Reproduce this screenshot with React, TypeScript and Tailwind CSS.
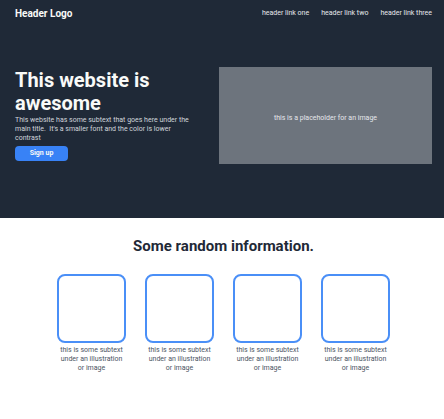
const links = ["header link one", "header link two", "header link three"];
const cards = [1, 2, 3, 4];
const subtext =
  "This website has some subtext that goes here under the main title. \u00a0It's a smaller font and the color is lower contrast";

export default function App() {
  return (
    <div className="min-h-screen bg-white font-[Roboto,sans-serif] text-[#1f2937]">
      <div className="bg-[#1f2937] pt-[6px] pr-3 pb-[54px] pl-[15px]">
        <header className="flex items-center justify-between">
          <div className="text-[10px] leading-[15px] font-bold text-[#f9faf8]">Header Logo</div>
          <nav className="flex gap-3 text-[7px] leading-[15px] text-[#e5e7eb]">
            {links.map((link) => (
              <a key={link} href="#">{link}</a>
            ))}
          </nav>
        </header>
        <section className="mt-[46px] grid grid-cols-[192fr_213fr] gap-3">
          <div className="pt-[2px]">
            <h1 className="text-[20px] leading-[23px] font-bold text-[#f9faf8]">This website is awesome</h1>
            <p className="max-w-[182px] pt-px text-[7px] leading-[9px] text-[#d1d5db]">{subtext}</p>
            <button type="button" className="mt-[3px] block h-[15px] w-[53px] rounded bg-[#3882f6] text-[7px] leading-[15px] font-bold text-[#f9faf8]">
              Sign up
            </button>
          </div>
          <div className="flex h-[97px] items-center justify-center bg-[#6d747d] pt-[6px] text-[7px] leading-[9px] text-[#e5e7eb]">
            this is a placeholder for an image
          </div>
        </section>
      </div>
      <section className="pt-[18px] pr-3 pl-[15px]">
        <h2 className="text-center text-[15px] leading-[20px] font-bold">Some random information.</h2>
        <div className="mt-[18px] flex justify-center gap-[19px]">
          {cards.map((card) => (
            <figure key={card} className="w-[69px]">
              <div className="h-[69px] rounded-lg border-2 border-[#4a8ff7]" />
              <figcaption className="mt-[3px] text-center text-[7px] leading-[9px] text-[#4b5563]">
                this is some subtext under an illustration or image
              </figcaption>
            </figure>
          ))}
        </div>
      </section>
    </div>
  );
}
